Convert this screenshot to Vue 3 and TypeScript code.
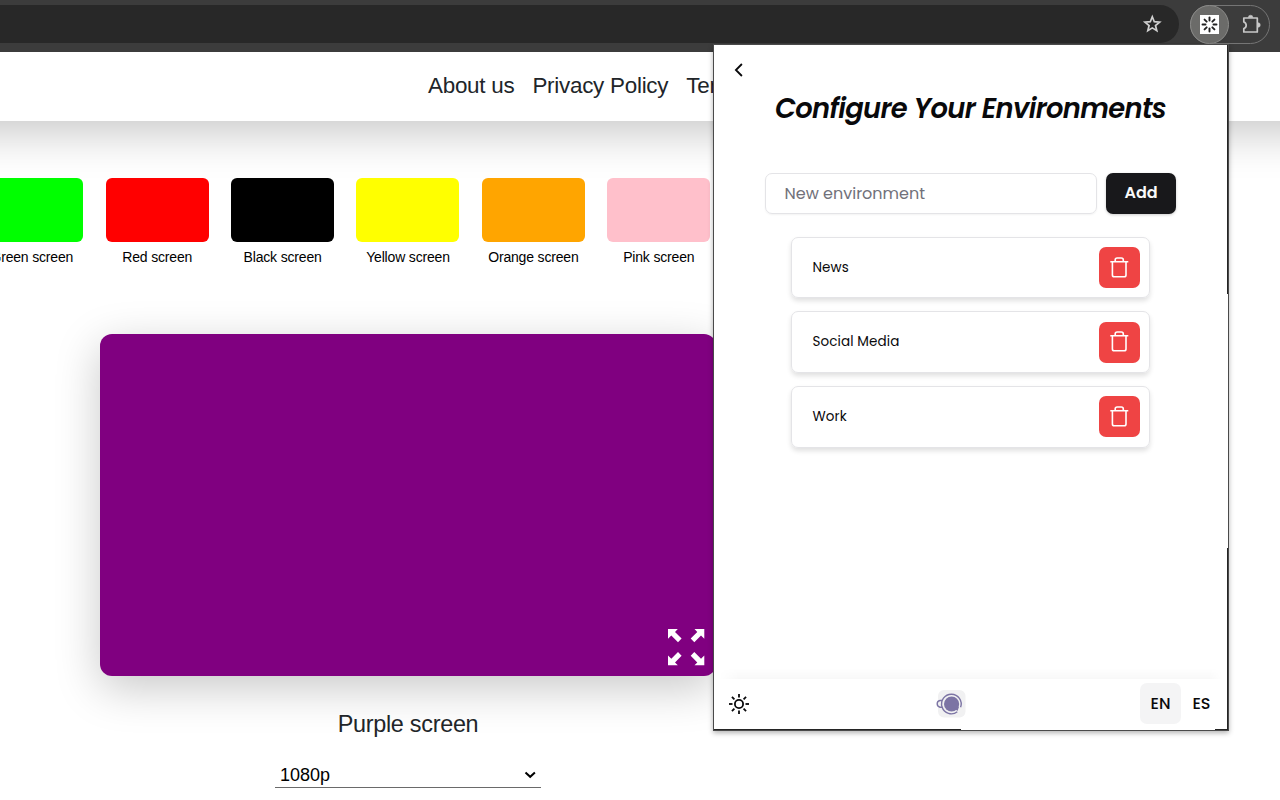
<script setup lang="ts">
interface Swatch {
  label: string
  color: string
}

const swatches: Swatch[] = [
  { label: 'Green screen', color: '#00ff00' },
  { label: 'Red screen', color: '#ff0000' },
  { label: 'Black screen', color: '#000000' },
  { label: 'Yellow screen', color: '#ffff00' },
  { label: 'Orange screen', color: '#ffa500' },
  { label: 'Pink screen', color: '#ffc0cb' },
]

const links: string[] = ['About us', 'Privacy Policy', 'Terms']

const environments: string[] = ['News', 'Social Media', 'Work']

const rays: number[] = [0, 45, 90, 135, 180, 225, 270, 315]
</script>

<template>
  <div class="window">
    <div class="toolbar">
      <div class="address">
        <svg class="star" width="20" height="20" viewBox="0 0 20 20">
          <path d="M10.3 2.8 L12.3 7.7 L17.6 8.1 L13.5 11.5 L14.8 16.7 L10.3 13.9 L5.8 16.7 L7.1 11.5 L3 8.1 L8.3 7.7 Z" fill="none" stroke="#d0d0d0" stroke-width="1.7" />
        </svg>
      </div>
      <div class="extensions">
        <div class="extension-active">
          <svg width="19" height="19" viewBox="0 0 19 19">
            <rect width="19" height="19" fill="#fff" />
            <line v-for="r in rays" :key="r" x1="9.5" y1="2.5" x2="9.5" y2="5.5" stroke="#222" stroke-width="1.9" stroke-linecap="round" :transform="`rotate(${r} 9.5 9.5)`" />
          </svg>
        </div>
        <svg class="puzzle" width="22" height="22" viewBox="0 0 22 22">
          <path d="M2.8 4 H16.3 V18 H2.8 V14.5 C6 13.8 6 9 2.8 8 Z" fill="none" stroke="#c8c8c8" stroke-width="1.7" stroke-linejoin="round" />
          <path d="M7.3 3.5 A2.3 2.3 0 0 1 11.9 3.5 Z M17 8.7 A2.3 2.3 0 0 1 17 13.3 Z" fill="#c8c8c8" stroke="#c8c8c8" stroke-width=".5" />
        </svg>
      </div>
    </div>

    <header class="site-header">
      <nav>
        <a v-for="link in links" :key="link">{{ link }}</a>
      </nav>
    </header>

    <main>
      <div class="swatches">
        <div v-for="s in swatches" :key="s.label" class="swatch">
          <div class="chip" :style="{ background: s.color }"></div>
          <span>{{ s.label }}</span>
        </div>
      </div>
      <section class="preview">
        <div class="canvas">
          <svg width="37" height="37" viewBox="0 0 37 37" fill="#fff">
            <path id="arrow" d="M0 0 H9.8 L7 2.9 L13.6 9.6 L10 13.3 L3.3 6.6 L0 9.8 Z" />
            <use href="#arrow" transform="translate(36.3 0) scale(-1 1)" />
            <use href="#arrow" transform="translate(0 36.3) scale(1 -1)" />
            <use href="#arrow" transform="translate(36.3 36.3) scale(-1 -1)" />
          </svg>
        </div>
        <h2>Purple screen</h2>
        <div class="select">
          <span>1080p</span>
          <svg width="12" height="8" viewBox="0 0 12 8"><path d="M1.5 1.5 L6.2 5.8 L10.9 1.5" fill="none" stroke="#000" stroke-width="2" /></svg>
        </div>
      </section>
    </main>

    <aside class="popup">
      <svg class="back" width="12" height="16" viewBox="0 0 12 16"><path d="M8.9 2 L2.9 8 L8.9 14" fill="none" stroke="#09090b" stroke-width="1.8" /></svg>
      <h1>Configure Your Environments</h1>
      <div class="form">
        <div class="input"><span>New environment</span></div>
        <button><span>Add</span></button>
      </div>
      <ul>
        <li v-for="env in environments" :key="env">
          <span class="name">{{ env }}</span>
          <div class="delete">
            <svg width="20" height="22" viewBox="0 0 20 22" fill="none" stroke="#fff" stroke-width="1.6">
              <path d="M.3 4.7 H18.3 M2.4 4.7 V17.9 Q2.4 19.7 4.2 19.7 H14.2 Q16 19.7 16 17.9 V4.7 M5.2 4.5 V3 Q5.2 1 7.2 1 H11.3 Q13.3 1 13.3 3 V4.5" />
            </svg>
          </div>
        </li>
      </ul>
      <footer>
        <svg class="sun" width="22" height="22" viewBox="0 0 22 22" fill="none" stroke="#09090b" stroke-width="1.8">
          <circle cx="11" cy="11" r="4.1" />
          <line v-for="r in rays" :key="r" x1="11" y1="1" x2="11" y2="4.5" :transform="`rotate(${r} 11 11)`" />
        </svg>
        <svg class="coffee" width="30" height="28" viewBox="0 0 30 28">
          <rect x="2" y="0" width="27.5" height="27.5" rx="6" fill="#f1f1f2" />
          <circle cx="15.6" cy="14" r="7.6" fill="#7c74a4" />
          <path d="M18 18 L23 17 L21.5 21 Z" fill="#7c74a4" />
          <path d="M21.3 21.8 A9.8 9.8 0 1 1 24.6 17.3" fill="none" stroke="#7c74a4" stroke-width="1.4" />
          <path d="M6 10.5 H4 A3.4 3.4 0 0 0 4 17.2 H6.3" fill="none" stroke="#7c74a4" stroke-width="1.4" />
        </svg>
        <div class="languages">
          <span class="lang active">EN</span>
          <span class="lang">ES</span>
        </div>
      </footer>
      <i class="edge edge-top"></i>
      <i class="edge edge-right"></i>
      <i class="edge edge-bottom"></i>
      <i class="edge edge-corner"></i>
    </aside>
  </div>
</template>

<style>
body {
  overflow: hidden;
}
</style>

<style scoped>
* {
  box-sizing: border-box;
}
.window {
  position: relative;
  width: 1280px;
  height: 800px;
  overflow: hidden;
  background: #fff;
  font-family: "Liberation Sans", Arial, sans-serif;
}
.toolbar {
  position: relative;
  z-index: 1;
  display: flex;
  height: 52px;
  padding-top: 5px;
  gap: 11px;
  background: #3c3c3c;
}
.address {
  display: flex;
  align-items: center;
  justify-content: flex-end;
  width: 1179px;
  height: 38px;
  padding-right: 17px;
  border-radius: 0 19px 19px 0;
  background: #282828;
}
.extensions {
  display: flex;
  align-items: center;
  width: 80px;
  height: 39px;
  border: 1px solid #757575;
  border-radius: 20px;
}
.extension-active {
  display: flex;
  align-items: center;
  justify-content: center;
  width: 39px;
  height: 39px;
  flex: none;
  margin-left: -1px;
  border: 1px solid #8a8a88;
  border-radius: 50%;
  background: #6b6b69;
}
.puzzle {
  margin-left: 12px;
  flex: none;
}
.site-header {
  height: 69px;
  margin: 0 -80px;
  padding-left: 80px;
  background: #fff;
  box-shadow: 0 12px 45px rgba(0, 0, 0, 0.22);
}
nav {
  display: flex;
  gap: 18px;
  padding: 21px 0 0 428px;
  font-size: 22.4px;
  line-height: 26px;
  letter-spacing: -0.25px;
  color: #212529;
  white-space: nowrap;
}
.swatches {
  display: flex;
  gap: 22.4px;
  margin: 57px 0 0 -19.7px;
}
.swatch {
  display: flex;
  flex-direction: column;
  align-items: center;
  width: 103px;
  font-size: 14px;
  line-height: 16px;
  letter-spacing: -0.17px;
  color: #000;
  gap: 7px;
}
.chip {
  width: 103px;
  height: 64px;
  border-radius: 6px;
}
.preview {
  display: flex;
  flex-direction: column;
  align-items: center;
  width: 616px;
  margin: 69px 0 0 100px;
}
.canvas {
  display: flex;
  align-items: flex-end;
  justify-content: flex-end;
  width: 616px;
  height: 342px;
  padding: 0 11px 10px 0;
  border-radius: 12px;
  background: #800080;
  box-shadow: 0 12px 45px rgba(0, 0, 0, 0.22);
}
h2 {
  margin: 34px 0 0;
  font-size: 23.4px;
  font-weight: 400;
  line-height: 28px;
  letter-spacing: -0.28px;
  color: #212529;
}
.select {
  display: flex;
  align-items: center;
  justify-content: space-between;
  width: 266px;
  height: 26px;
  margin-top: 24px;
  padding: 1px 5px 0;
  border-bottom: 1px solid #6a6a6a;
  font-size: 18px;
  color: #000;
}
.popup {
  position: absolute;
  z-index: 2;
  left: 713px;
  top: 44px;
  width: 516px;
  height: 687px;
  border: 1px solid #4a4a4a;
  background: #fff;
  box-shadow: 0 2px 5px rgba(0, 0, 0, 0.3);
  font-family: Poppins, Inter, "Noto Sans", sans-serif;
  color: #09090b;
}
.back {
  display: block;
  margin: 17px 0 0 19px;
}
h1 {
  width: 100%;
  margin: 13px 0 0;
  padding-right: 1px;
  font-size: 27.4px;
  line-height: 36px;
  font-weight: 600;
  font-style: italic;
  letter-spacing: -0.685px;
  text-align: center;
  white-space: nowrap;
}
.form {
  display: flex;
  gap: 9px;
  margin: 46px 0 0 51px;
}
.input {
  display: flex;
  align-items: center;
  width: 332px;
  height: 41px;
  padding-left: 18.5px;
  border: 1px solid #e4e4e7;
  border-radius: 7px;
  box-shadow: 0 1px 2px rgba(0, 0, 0, 0.05);
  font-size: 16px;
  color: #71717a;
}
button {
  width: 70px;
  height: 41px;
  padding: 0 0 1px;
  border: 0;
  border-radius: 7px;
  background: #18181b;
  color: #fafafa;
  font: 600 16px/38px Poppins, Inter, sans-serif;
  box-shadow: 0 1px 3px rgba(0, 0, 0, 0.2);
}
ul {
  display: flex;
  flex-direction: column;
  gap: 13px;
  margin: 22.8px 0 0 77px;
  padding: 0;
  list-style: none;
}
li {
  display: flex;
  align-items: center;
  justify-content: space-between;
  width: 359px;
  height: 61.6px;
  padding: 0 9px 0 20.5px;
  border: 1px solid #e4e4e7;
  border-radius: 7px;
  box-shadow: 0 3px 5px rgba(0, 0, 0, 0.12);
}
.name {
  font-size: 13.5px;
  line-height: 20px;
  letter-spacing: 0.1px;
  margin-top: -0.2px;
}
.delete {
  display: flex;
  align-items: center;
  justify-content: center;
  width: 41px;
  height: 41px;
  border-radius: 7px;
  background: #ef4444;
}
footer {
  position: absolute;
  left: 0;
  bottom: 0;
  display: flex;
  align-items: center;
  justify-content: space-between;
  width: 514px;
  height: 51px;
  padding: 0 6px 2px 14px;
  background: #fff;
}
footer::before {
  content: "";
  position: absolute;
  left: 5px;
  right: 5px;
  top: -11px;
  height: 11px;
  background: linear-gradient(to bottom, rgba(0, 0, 0, 0), rgba(0, 0, 0, 0.027));
  mask-image: linear-gradient(to right, transparent, #000 20px, #000 490px, transparent);
}
.coffee {
  margin-left: 11px;
}
.languages {
  display: flex;
}
.lang {
  width: 41px;
  height: 41px;
  border-radius: 7px;
  font-size: 16px;
  font-weight: 500;
  line-height: 41px;
  text-align: center;
}
.lang.active {
  background: #f4f4f5;
}
.edge {
  position: absolute;
  background: #242424;
}
.edge-top {
  right: 0;
  top: 0;
  width: 1px;
  height: 249px;
}
.edge-right {
  right: 0;
  bottom: 0;
  width: 1px;
  height: 182px;
}
.edge-bottom {
  left: 0;
  bottom: 0;
  width: 247px;
  height: 1px;
}
.edge-corner {
  right: 0;
  bottom: 0;
  width: 13px;
  height: 1px;
}
</style>
